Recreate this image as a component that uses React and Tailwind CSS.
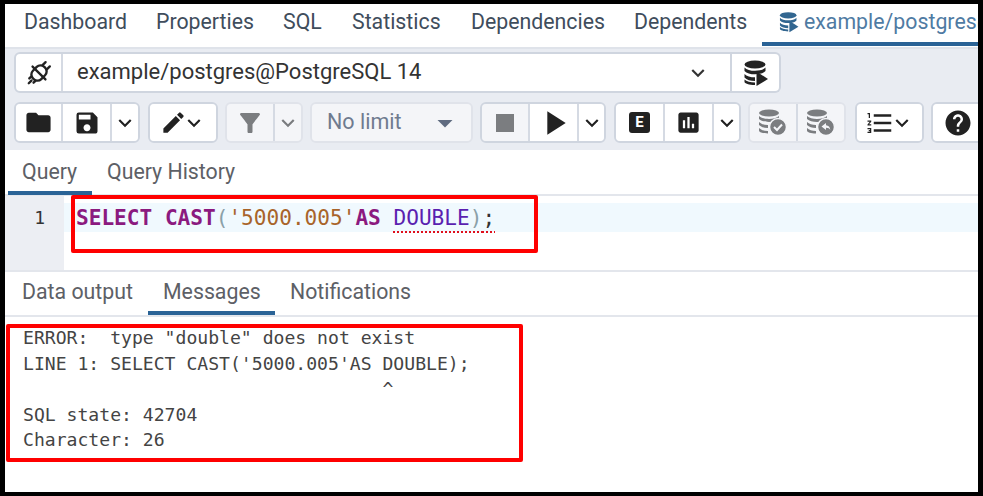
import React from "react";
import { MdFolder, MdSave, MdEdit, MdFilterAlt, MdStop, MdPlayArrow, MdHelp, MdKeyboardArrowDown, MdArrowDropDown, MdAssessment, MdFormatListNumbered } from "react-icons/md";

const Chev = ({ className = "" }) => <MdKeyboardArrowDown className={"text-[26px] shrink-0 " + className} />;

const DbPaths = () => (
  <>
    <ellipse cx="13" cy="5.500" rx="10.500" ry="4" />
    <path d="M2.500 8.500c2 2.500 6 3.300 10.500 3.300s8.500-.8 10.500-3.300V12c-2 2.500-6 3.300-10.500 3.300S4.500 14.500 2.500 12z" />
    <path d="M2.500 15c2 2.500 6 3.300 10.500 3.300V22C8.500 22 4.500 21 2.500 18.500z" />
    <path d="M2.500 20.500c2 2 6 3 10.500 3V26c-6 0-10.500-1.500-10.500-3z" />
    <path d="M14.500 12.500l11.500 7.500-11.500 7z" />
  </>
);

const DbBadge = ({ undo }) => (
  <svg width="34" height="30" viewBox="0 0 34 30">
    <g fill="#7b7d80">
      <ellipse cx="13" cy="5" rx="10" ry="3.500" />
      <path d="M3 8c2 2 6 3 10 3s8-1 10-3v3c-2 2-6 3-10 3s-8-1-10-3z" />
      <path d="M3 14c2 2 5 3 9 3v3c-4 0-7-1-9-3z" />
      <path d="M3 20c2 2 5 3 9 3v2.500c-5 0-9-1-9-3z" />
    </g>
    <circle cx="22" cy="19" r="8.500" fill="#7b7d80" stroke="#f4f5f8" strokeWidth="1.500" />
    {undo ? (
      <path d="M22 15l-4.500 3.500 4.500 3.500v-2.200c2.500 0 3.500.8 4.300 2.200-.3-3-1.800-4.600-4.300-4.800z" fill="#f4f5f8" />
    ) : (
      <path d="M18 19l3 3 5-5.500" fill="none" stroke="#f4f5f8" strokeWidth="2" />
    )}
  </svg>
);

const Plug = () => (
  <svg width="30" height="30" viewBox="-14 -14 28 28" fill="none" stroke="#222" strokeWidth="2.200" strokeLinecap="round" strokeLinejoin="round">
    <g transform="rotate(45)">
      <rect x="-5.500" y="-7.500" width="11" height="15" rx="5" />
      <path d="M-8.500 0h17" />
      <path d="M-2.800 -7.500v-4M2.800 -7.500v-4" />
      <path d="M-2.800 7.500v2.500M2.800 7.500v2.500M0 10v3.500" />
    </g>
  </svg>
);

const Btn = ({ w, dim, last, children }) => (
  <div className={"flex items-center justify-center h-full shrink-0 " + (last ? "" : "border-r-2 border-[#d5dae3] ") + (dim ? "bg-[#f4f5f8]" : "bg-white")} style={{ width: w }}>
    {children}
  </div>
);

const Group = ({ dim, className = "", children }) => (
  <div className={"flex h-[41px] rounded-md border-2 overflow-hidden shrink-0 " + (dim ? "border-[#e0e3ea] " : "border-[#cfd5df] ") + className}>{children}</div>
);

const topTabs = [
  ["Dashboard", "w-[132px]"],
  ["Properties", "w-[127px]"],
  ["SQL", "w-[69px]"],
  ["Statistics", "w-[119px]"],
  ["Dependencies", "w-[163px]"],
  ["Dependents", "w-[128px]"],
];

export default function App() {
  return (
    <div className="relative w-[983px] h-[496px] overflow-hidden bg-white border-t-[4px] border-l-[5px] border-r-[5px] border-b-[4px] border-black flex flex-col text-[#222] font-['Roboto',sans-serif]">
      <div className="flex h-[43px] shrink-0 items-start text-[21.3px] text-[#3f4d5c]">
        <div className="flex pl-[19px] pt-[4px]">
          {topTabs.map(([t, w]) => (
            <div key={t} className={w + " leading-[28px] whitespace-nowrap"}>{t}</div>
          ))}
        </div>
        <div className="flex-1 h-[42px] pl-[16px] pt-[4px] flex gap-[4px] border-b-[4px] border-[#2a6396] text-[#4f7ba3] whitespace-nowrap overflow-hidden">
          <div className="pt-[3px] shrink-0">
            <svg width="22" height="22" viewBox="0 0 28 28" fill="#326690"><DbPaths /></svg>
          </div>
          <span className="leading-[28px]">example/postgres@PostgreSQL 14</span>
        </div>
      </div>

      <div className="h-[103px] shrink-0 bg-[#e9ecf2] border-t-2 border-[#dfe3ea] pl-[9px] pt-[3px] flex flex-col gap-[9px] overflow-hidden">
        <div className="flex items-center h-[41px]">
          <div className="flex w-[718px] h-full rounded-l-md bg-white border-2 border-[#cfd5df]">
            <div className="w-[47px] flex items-center justify-center border-r-2 border-[#d5dae3]"><Plug /></div>
            <div className="flex-1 flex items-center justify-between pl-[14px] pr-[19px] text-[22px] leading-[30px] text-[#333]">
              <span className="-mt-[2px]">example/postgres@PostgreSQL 14</span>
              <Chev />
            </div>
          </div>
          <div className="flex w-[49px] h-full items-center justify-center rounded-r-md bg-white border-2 border-l-0 border-[#cfd5df]">
            <svg width="28" height="28" viewBox="0 0 28 28" fill="#222"><DbPaths /></svg>
          </div>
        </div>
        <div className="flex items-center">
          <Group>
            <Btn w={47}><MdFolder className="text-[29px]" /></Btn>
            <Btn w={49}><MdSave className="text-[28px]" /></Btn>
            <Btn w={26} last><Chev /></Btn>
          </Group>
          <Group className="ml-[8px]">
            <Btn w={66} last><MdEdit className="text-[27px] -mr-[3px]" /><Chev className="-ml-[3px]" /></Btn>
          </Group>
          <Group dim className="ml-[7px]">
            <Btn w={48} dim><MdFilterAlt className="text-[30px] text-[#7b7d80]" /></Btn>
            <Btn w={26} dim last><Chev className="text-[#7b7d80]" /></Btn>
          </Group>
          <Group dim className="ml-[7px]">
            <div className="w-[159px] h-full bg-[#f4f5f8] flex items-center justify-between pl-[15px] pr-[8px] text-[21.5px] text-[#6f7b8f]">
              <span>No limit</span>
              <MdArrowDropDown className="text-[36px] text-[#5f6b80]" />
            </div>
          </Group>
          <Group className="ml-[7px]">
            <Btn w={48} dim><MdStop className="text-[36px] text-[#7b7d80]" /></Btn>
            <Btn w={49}><MdPlayArrow className="text-[40px]" /></Btn>
            <Btn w={25} last><Chev /></Btn>
          </Group>
          <Group className="ml-[8px]">
            <Btn w={49}>
              <div className="w-[21px] h-[21px] rounded-[3px] bg-[#222] flex items-center justify-center text-white text-[15px] font-bold leading-none">E</div>
            </Btn>
            <Btn w={49}><MdAssessment className="text-[27px]" /></Btn>
            <Btn w={25} last><Chev /></Btn>
          </Group>
          <Group dim className="ml-[7px]">
            <Btn w={48} dim><DbBadge /></Btn>
            <Btn w={46} dim last><DbBadge undo /></Btn>
          </Group>
          <Group className="ml-[9px]">
            <Btn w={65} last><MdFormatListNumbered className="text-[30px] -mr-[3px]" /><Chev className="-ml-[3px]" /></Btn>
          </Group>
          <Group className="ml-[7px]">
            <Btn w={50} last><MdHelp className="text-[30px]" /></Btn>
          </Group>
        </div>
      </div>

      <div className="h-[46px] shrink-0 flex border-b-2 border-[#e3e6ec] text-[21.3px] text-[#5d6066]">
        <div className="ml-[3px] w-[84px] h-[45px] pl-[14px] pt-[8px] border-b-[4px] border-[#2a6396] leading-[28px]">Query</div>
        <div className="pl-[15px] pt-[8px] leading-[28px]">Query History</div>
      </div>

      <div className="h-[74px] shrink-0 flex">
        <div className="w-[59px] bg-[#eceef3] pt-[7px] pr-[19px] text-right font-['DejaVu_Sans_Mono',monospace] text-[18px] leading-[29px] text-[#333] shrink-0">1</div>
        <div className="flex-1 pt-[7px]">
          <div className="h-[29px] bg-[#f0f9fe] pl-[12px] font-['DejaVu_Sans_Mono',monospace] text-[21.1px] leading-[30px] whitespace-pre">
            <span className="text-[#8b1a7f] font-semibold">SELECT CAST</span>
            <span className="text-[#8aa0a8]">(</span>
            <span className="text-[#a8642a]">'5000.005'</span>
            <span className="text-[#8b1a7f] font-semibold">AS</span>{" "}
            <span className="text-[#5a1fb0] underline decoration-dotted decoration-[#e0101c] decoration-2 underline-offset-[6px]">DOUBLE</span>
            <span className="text-[#8aa0a8] underline decoration-dotted decoration-[#e0101c] decoration-2 underline-offset-[6px]">)</span>
            <span className="text-[#333] underline decoration-dotted decoration-[#e0101c] decoration-2 underline-offset-[6px]">;</span>
          </div>
        </div>
      </div>

      <div className="h-[47px] shrink-0 flex border-y-2 border-[#e3e6ec] text-[21.3px] text-[#5d6066]">
        <div className="pl-[17px] pt-[6px] w-[143px] leading-[28px] whitespace-nowrap">Data output</div>
        <div className="w-[127px] h-[43px] pl-[15px] pt-[6px] border-b-[4px] border-[#2a6396] leading-[28px]">Messages</div>
        <div className="pl-[15px] pt-[6px] leading-[28px]">Notifications</div>
      </div>

      <div className="pl-[18px] pt-[8px] font-['DejaVu_Sans_Mono',monospace] text-[18.1px] leading-[25.5px] text-[#444] whitespace-pre">
        <div>{'ERROR:  type "double" does not exist'}</div>
        <div>{"LINE 1: SELECT CAST('5000.005'AS DOUBLE);"}</div>
        <div>{"                                 ^"}</div>
        <div>SQL state: 42704</div>
        <div>Character: 26</div>
      </div>

      <div className="absolute left-[66px] top-[191px] w-[467px] h-[58px] border-[4px] border-[#ff0000] rounded-[2px]" />
      <div className="absolute left-[1px] top-[320px] w-[517px] h-[138px] border-[4px] border-[#ff0000] rounded-[2px]" />
    </div>
  );
}
